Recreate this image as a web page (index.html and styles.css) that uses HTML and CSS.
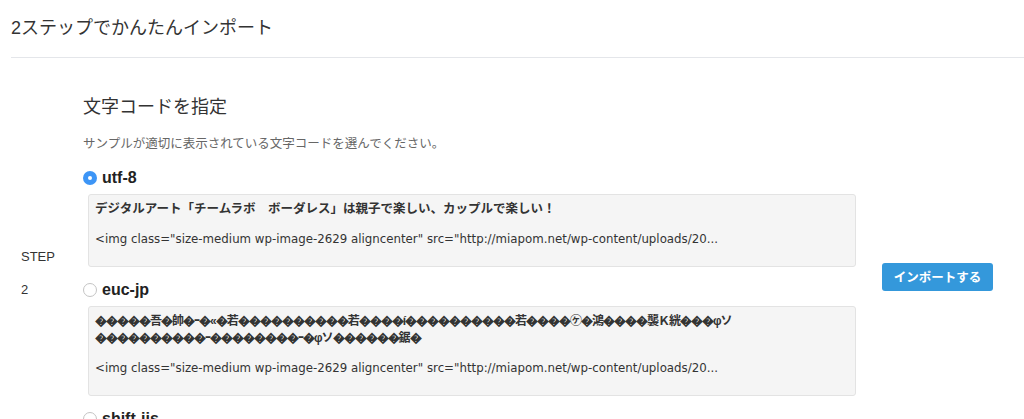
FILE: index.html
```html
<!DOCTYPE html>
<html lang="ja">
<head>
<meta charset="utf-8">
<title>2ステップでかんたんインポート</title>
<link rel="stylesheet" href="styles.css">
</head>
<body>
<div class="page">
  <h1 class="title">2ステップでかんたんインポート</h1>
  <hr class="rule">
  <div class="step-row">
    <div class="step-label">
      <div>STEP</div>
      <div>2</div>
    </div>
    <div class="step-body">
      <h2 class="section-title">文字コードを指定</h2>
      <p class="lead">サンプルが適切に表示されている文字コードを選んでください。</p>

      <div class="option">
        <label class="opt-label"><span class="radio checked"></span>utf-8</label>
        <div class="sample">
          <p class="sample-title">デジタルアート「チームラボ　ボーダレス」は親子で楽しい、カップルで楽しい！</p>
          <p class="sample-code">&lt;img class="size-medium wp-image-2629 aligncenter" src="http://miapom.net/wp-content/uploads/20...</p>
        </div>
      </div>

      <div class="option">
        <label class="opt-label"><span class="radio"></span>euc-jp</label>
        <div class="sample">
          <p class="sample-title garbled">�����吾�帥�ｰ�«�若����������若����í����������若����㋘�鴻����襲Ｋ絖���φソ<br>����������ｰ��������ｰ�φソ������鋸�</p>
          <p class="sample-code">&lt;img class="size-medium wp-image-2629 aligncenter" src="http://miapom.net/wp-content/uploads/20...</p>
        </div>
      </div>

      <div class="option">
        <label class="opt-label"><span class="radio"></span>shift-jis</label>
        <div class="sample">
          <p class="sample-title garbled">繝�ず繧ｿ繝ｫ繧｢繝ｼ繝医��繝√���繝�繝ｩ繝�</p>
          <p class="sample-code">&lt;img class="size-medium wp-image-2629 aligncenter" src="http://miapom.net/wp-content/uploads/20...</p>
        </div>
      </div>
    </div>
    <div class="step-action">
      <button class="btn-import" type="button">インポートする</button>
    </div>
  </div>
</div>
</body>
</html>
```
FILE: styles.css
```css
html, body {
  margin: 0;
  padding: 0;
  background: #ffffff;
  overflow: hidden;
}

body {
  font-family: "Liberation Sans", "Noto Sans CJK JP", sans-serif;
  color: #333333;
  font-size: 12px;
}

.page {
  padding-left: 11px;
}

.title {
  margin: 16px 0 0;
  font-size: 18px;
  line-height: 25px;
  font-weight: normal;
  color: #333333;
}

.rule {
  margin: 16px 0 0;
  border: 0;
  border-top: 1px solid #e4e6ea;
  height: 0;
}

.step-row {
  display: flex;
  align-items: center;
}

.step-label {
  width: 62px;
  padding-left: 10px;
  display: flex;
  flex-direction: column;
  gap: 16px;
  font-size: 13px;
  line-height: 17px;
  color: #333333;
  margin-bottom: 20px;
}

.step-body {
  width: 773px;
  padding-top: 37px;
}

.section-title {
  margin: 0;
  font-size: 18px;
  line-height: 25px;
  font-weight: normal;
  color: #333333;
}

.lead {
  margin: 16px 0 0;
  font-size: 12.5px;
  line-height: 17px;
  color: #666666;
}

.option {
  margin-top: 15px;
}

.option + .option {
  margin-top: 13px;
}

.opt-label {
  display: flex;
  align-items: center;
  gap: 5px;
  height: 20px;
  font-size: 16px;
  font-weight: bold;
  color: #222222;
}

.radio {
  width: 14px;
  height: 14px;
  border-radius: 50%;
  box-sizing: border-box;
  border: 1px solid #c4c4c4;
  background: #ffffff;
  flex: none;
  position: relative;
}

.radio.checked {
  border: none;
  background: #3d95f6;
}

.radio.checked::after {
  content: "";
  position: absolute;
  left: 5px;
  top: 5px;
  width: 4px;
  height: 4px;
  border-radius: 50%;
  background: #ffffff;
}

.sample {
  margin: 6px 0 0 5px;
  background: #f5f5f5;
  border: 1px solid #e3e3e3;
  border-radius: 3px;
  padding: 6px 7px 18px 6px;
}

.sample-title {
  margin: 0 0 13px;
  font-size: 12.5px;
  line-height: 17px;
  font-weight: bold;
  color: #333333;
}

.sample-title.garbled {
  font-size: 12px;
  letter-spacing: -1px;
}

.sample-code {
  margin: 0;
  font-family: "DejaVu Sans", "Noto Sans CJK JP", sans-serif;
  font-size: 11.8px;
  line-height: 17px;
  color: #333333;
}

.step-action {
  padding-left: 26px;
  margin-bottom: 13px;
}

.btn-import {
  width: 111px;
  height: 28px;
  border: none;
  border-radius: 3px;
  background: #3498db;
  color: #ffffff;
  font-family: "Liberation Sans", "Noto Sans CJK JP", sans-serif;
  font-size: 12.5px;
  font-weight: bold;
  padding: 0;
}
```
